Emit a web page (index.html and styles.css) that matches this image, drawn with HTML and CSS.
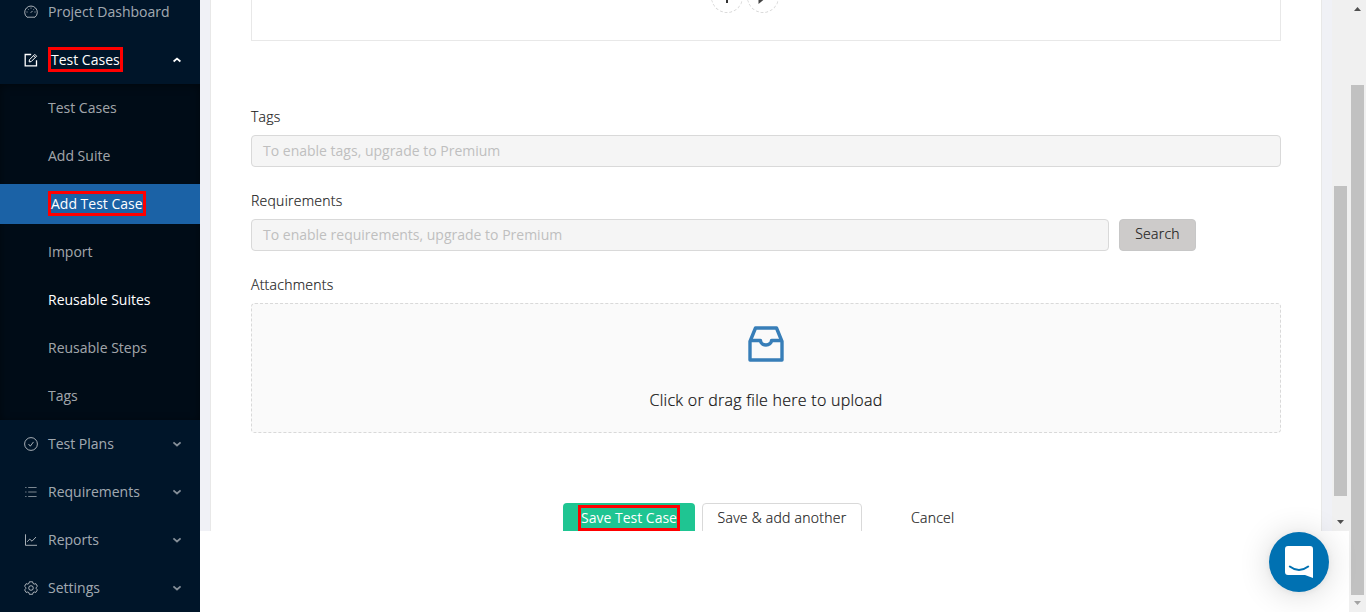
FILE: index.html
```html
<!DOCTYPE html>
<html lang="en">
<head>
<meta charset="utf-8">
<title>Add Test Case</title>
<link rel="stylesheet" href="styles.css">
</head>
<body>
<div class="app">
  <nav class="sidebar">
    <a class="item">
      <svg class="icon" viewBox="0 0 14 14"><path d="M3 12.2A6.3 6.3 0 1 1 11 12.2Z"/><path d="M7 2.6v1M3.8 3.9l.7.7M10.2 3.9l-.7.7M2.5 7h1M10.5 7h1M6.7 7.8l1.9-1.9"/></svg>
      <span class="label">Project Dashboard</span>
    </a>
    <a class="item open">
      <svg class="icon" viewBox="0 0 14 14"><path class="heavy" d="M7.2 1.5H1.2v11.3h11.3V7.2"/><path d="M5.2 8.9l.2-2.1 5.4-5.4 1.8 1.8-5.4 5.4zM9.5 2.7l1.8 1.8"/></svg>
      <span class="label"><span class="mark">Test Cases</span></span>
      <svg class="chevron" viewBox="0 0 10 6"><path d="M1.6 4.5L5 1.6l3.4 2.9"/></svg>
    </a>
    <div class="submenu">
      <a class="sub">Test Cases</a>
      <a class="sub">Add Suite</a>
      <a class="sub selected"><span class="mark">Add Test Case</span></a>
      <a class="sub">Import</a>
      <a class="sub hover">Reusable Suites</a>
      <a class="sub">Reusable Steps</a>
      <a class="sub">Tags</a>
    </div>
    <a class="item">
      <svg class="icon" viewBox="0 0 14 14"><circle cx="7" cy="7" r="6.4"/><path d="M4.5 7l1.8 2.2 3.2-4.3"/></svg>
      <span class="label">Test Plans</span>
      <svg class="chevron" viewBox="0 0 10 6"><path d="M1.4 1.4L5 4.5l3.6-3.1"/></svg>
    </a>
    <a class="item">
      <svg class="icon dim" viewBox="0 0 14 14"><path d="M4.2 2.5H12.6M4.2 7H12.6M4.2 11.5H12.6M1.2 2.5H2.5M1.2 7H2.5M1.2 11.5H2.5"/></svg>
      <span class="label">Requirements</span>
      <svg class="chevron" viewBox="0 0 10 6"><path d="M1.4 1.4L5 4.5l3.6-3.1"/></svg>
    </a>
    <a class="item">
      <svg class="icon" viewBox="0 0 14 14"><path d="M1.5 1.3V12.3H13"/><path d="M3.2 8.8l2.5-2.7 2.3 2.1 4-4.2"/></svg>
      <span class="label">Reports</span>
      <svg class="chevron" viewBox="0 0 10 6"><path d="M1.4 1.4L5 4.5l3.6-3.1"/></svg>
    </a>
    <a class="item">
      <svg class="icon" viewBox="0 0 14 14"><path d="M5.4.8h3.2l.5 1.7 1.1.6 1.7-.4 1.5 2.6L12.2 6.4v1.3l1.2 1.2-1.5 2.5-1.7-.4-1.1.6-.5 1.7H5.4l-.5-1.7-1.1-.6-1.7.4L.6 8.9 1.8 7.7V6.4L.6 5.3 2.1 2.7l1.7.4 1.1-.6z"/><circle cx="7" cy="7" r="2.3"/></svg>
      <span class="label">Settings</span>
      <svg class="chevron" viewBox="0 0 10 6"><path d="M1.4 1.4L5 4.5l3.6-3.1"/></svg>
    </a>
  </nav>

  <main class="viewport">
    <div class="card">
      <section class="steps">
        <span class="round"><svg viewBox="0 0 14 14"><path d="M7 1v12M1 7h12"/></svg></span>
        <span class="round"><svg viewBox="0 0 14 14"><path class="solid" d="M2.5 14v-3.500L6 7h5z"/></svg></span>
      </section>

      <label class="caption">Tags</label>
      <div class="input">To enable tags, upgrade to Premium</div>

      <label class="caption">Requirements</label>
      <div class="row">
        <div class="input req">To enable requirements, upgrade to Premium</div>
        <button class="btn search">Search</button>
      </div>

      <label class="caption">Attachments</label>
      <div class="upload">
        <svg class="inbox" viewBox="0 0 36 36"><path d="M2 15.5L7.5 2h21L34 15.5V34H2z"/><path d="M2 14.5h10.5a5.5 4.5 0 0 0 11 0H34"/></svg>
        <p class="hint">Click or drag file here to upload</p>
      </div>

      <div class="actions">
        <button class="btn save"><span class="mark">Save Test Case</span></button>
        <button class="btn another">Save &amp; add another</button>
        <button class="btn cancel">Cancel</button>
      </div>
    </div>
    <div class="scroll inner">
      <span class="thumb"></span>
      <svg class="arrow" viewBox="0 0 7 4"><path d="M0 0h7L3.5 4z"/></svg>
    </div>
  </main>

  <div class="scroll outer">
    <svg class="arrow" viewBox="0 0 7 4"><path d="M0 4h7L3.5 0z"/></svg>
    <span class="thumb"></span>
    <svg class="arrow dim" viewBox="0 0 7 4"><path d="M0 0h7L3.5 4z"/></svg>
  </div>
</div>

<div class="chat">
  <svg viewBox="0 0 28 32"><path class="bubble" d="M3 0h22a3 3 0 0 1 3 3v29l-8-3H3a3 3 0 0 1-3-3V3a3 3 0 0 1 3-3z"/><path class="smile" d="M4.8 20.5Q14 27.5 23.2 20.5"/></svg>
</div>
</body>
</html>
```

FILE: styles.css
```css
* { box-sizing: border-box; }

body {
  margin: 0;
  height: 612px;
  overflow: hidden;
  background: #fff;
  font-family: "Open Sans", sans-serif;
  font-size: 14px;
  line-height: 20px;
}

.app { display: flex; height: 612px; }

/* Navigation */
.sidebar {
  width: 200px;
  margin-top: -12px;
  background: #001529;
  color: rgba(255, 255, 255, .65);
  flex: none;
}
.item { display: flex; align-items: center; height: 48px; padding: 0 18px 0 24px; }
.item.open { color: #fff; }
.icon { width: 14px; height: 14px; margin-right: 10px; fill: none; stroke: currentColor; stroke-width: 1; }
.icon .heavy { stroke-width: 1.3; }
.icon.dim { opacity: .75; }
.label { flex: 1; }
.chevron { width: 10px; height: 6px; fill: none; stroke: currentColor; stroke-width: 1.8; opacity: .8; }
.item.open .chevron { opacity: 1; }
.submenu {
  display: flex;
  flex-direction: column;
  gap: 8px;
  padding: 4px 0;
  background: #000c17;
  box-shadow: inset 0 2px 8px rgba(0, 0, 0, .45);
}
.sub { display: flex; align-items: center; height: 40px; padding-left: 48px; }
.sub.selected { background: #1b62a6; color: #fff; }
.sub.hover { color: #fff; }
.mark {
  display: block;
  width: fit-content;
  height: 25px;
  margin-bottom: 1px;
  line-height: 19px;
  border: 3px solid #f00;
  white-space: nowrap;
}

/* Form */
.viewport {
  display: flex;
  flex: 1;
  height: 531px;
  padding-left: 10px;
  background: #f0f1f6;
  overflow: hidden;
}
.card {
  width: 1112px;
  height: 560px;
  margin-right: 10px;
  padding: 0 40px;
  background: #fff;
  border: solid #e8e8e8;
  border-width: 0 1px;
  color: #1c1c1c;
  font-weight: 300;
  letter-spacing: .26px;
  -webkit-text-stroke: .2px;
  flex: none;
}
.steps {
  display: flex;
  justify-content: center;
  gap: 4px;
  height: 41px;
  margin-bottom: 66px;
  padding-right: 42px;
  border: solid #e8e8e8;
  border-width: 0 1px 1px;
}
.round {
  display: flex;
  align-items: center;
  justify-content: center;
  width: 32px;
  height: 32px;
  margin-top: -19px;
  border: 1px dashed #d9d9d9;
  border-radius: 50%;
}
.round svg { width: 14px; height: 14px; fill: none; stroke: #333; stroke-width: 2; }
.round .solid { fill: #444; stroke: none; }
.caption { display: block; height: 20px; margin-bottom: 8px; }
.input {
  height: 32px;
  margin-bottom: 24px;
  padding: 5px 11px;
  border: 1px solid #d9d9d9;
  border-radius: 4px;
  background: #f5f5f5;
  color: #bfbfbf;
  font-weight: 400;
  letter-spacing: 0;
  -webkit-text-stroke: 0;
}
.row { display: flex; gap: 10px; }
.req { width: 858px; }
.btn {
  height: 32px;
  padding: 0 0 2px;
  border: 1px solid #d9d9d9;
  border-radius: 4px;
  background: #fff;
  color: inherit;
  font: inherit;
  letter-spacing: inherit;
  line-height: 28px;
  white-space: nowrap;
}
.search { width: 77px; background: #cdcbca; border-color: #c7c7c7; }
.upload {
  display: flex;
  flex-direction: column;
  align-items: center;
  height: 130px;
  padding-top: 22px;
  border: 1px dashed #d9d9d9;
  border-radius: 4px;
  background: #fafafa;
}
.inbox { width: 36px; height: 36px; fill: none; stroke: #377eb8; stroke-width: 3.4; stroke-linejoin: round; }
.hint { margin: 26px 0 0; font-size: 16px; line-height: 24px; color: #111; }
.actions { display: flex; margin: 70px 0 0 312px; }
.save {
  padding: 0 0 2px 15px;
  width: 132px;
  border: 0;
  background: #1fc592;
  color: #fff;
  font-weight: 400;
  letter-spacing: 0;
  -webkit-text-stroke: 0;
}
.save .mark { width: 102px; height: 26px; margin-bottom: 0; line-height: 20px; }
.another { width: 160px; margin-left: 7px; }
.cancel { margin-left: 33px; padding-left: 15px; padding-right: 15px; border-color: transparent; background: none; }

/* Scrollbars */
.scroll { display: flex; flex-direction: column; align-items: center; width: 17px; background: #f0f0f0; flex: none; }
.thumb { width: 13px; background: #c1c1c1; }
.inner { padding-top: 186px; }
.inner .thumb { height: 310px; margin-bottom: 24px; }
.outer { padding-top: 7px; }
.outer .thumb { height: 510px; margin: 74px 0 6px; }
.arrow { width: 7px; height: 4px; fill: #505050; }
.arrow.dim { fill: #a3a3a3; }

/* Chat launcher floats above the page */
.chat {
  position: absolute;
  left: 1269px;
  top: 532px;
  display: flex;
  align-items: center;
  justify-content: center;
  width: 60px;
  height: 60px;
  border-radius: 50%;
  background: #0071b2;
  box-shadow: 0 1px 6px rgba(0, 0, 0, .06), 0 2px 32px rgba(0, 0, 0, .16);
}
.chat svg { width: 28px; height: 32px; }
.bubble { fill: #fff; }
.smile { fill: none; stroke: #0071b2; stroke-width: 2; stroke-linecap: round; }
```
